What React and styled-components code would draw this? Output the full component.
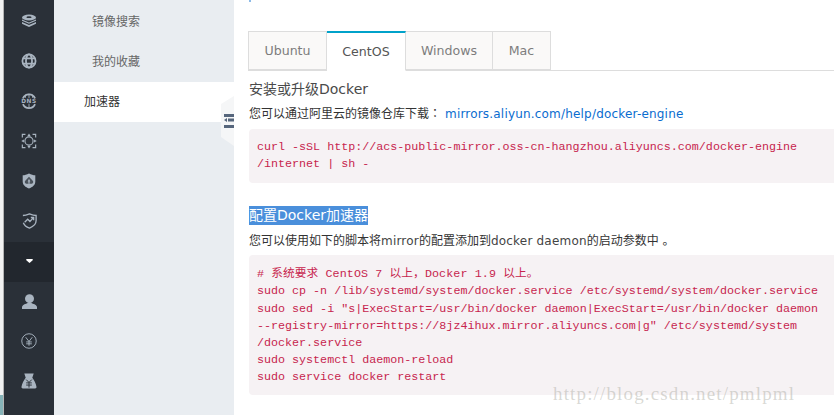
import React from "react";
import styled, { createGlobalStyle } from "styled-components";

const GlobalStyle = createGlobalStyle`
  html, body {
    margin: 0;
    padding: 0;
    height: 415px;
    overflow: hidden;
    background: #fff;
    font-family: "DejaVu Sans", "Noto Sans CJK SC", sans-serif;
  }
`;

const Page = styled.div`
  position: relative;
  display: flex;
  width: 834px;
  height: 415px;
  overflow: hidden;
`;

const Edge = styled.div`
  width: 3px;
  display: flex;
  flex-direction: column;
  justify-content: flex-end;
  background: #f1f1f1;
  border-right: 1px solid #b4b4b4;
`;

const EdgeTeal = styled.div`
  height: 20px;
  background: #86b3b8;
`;

const Rail = styled.nav`
  width: 50px;
  flex-shrink: 0;
  padding-top: 2px;
  background: #2a3038;
  color: #a9b4c0;
`;

const RailItem = styled.div`
  box-sizing: border-box;
  height: 40px;
  padding-bottom: 2px;
  display: flex;
  align-items: center;
  justify-content: center;
  background: ${(props) => (props.$active ? "#22272e" : "transparent")};
  color: ${(props) => (props.$active ? "#fff" : "inherit")};
`;

const SubNav = styled.aside`
  position: relative;
  width: 180px;
  flex-shrink: 0;
  padding-top: 2px;
  background: #e9edf1;
`;

const SubItem = styled.div`
  box-sizing: border-box;
  height: 40px;
  padding-bottom: 4px;
  display: flex;
  align-items: center;
  padding-left: ${(props) => (props.$active ? "30px" : "38px")};
  font-size: 12px;
  color: ${(props) => (props.$active ? "#333" : "#666")};
  background: ${(props) => (props.$active ? "#fff" : "transparent")};
`;

const Handle = styled.div`
  position: absolute;
  right: 0;
  top: 96px;
  width: 13px;
  height: 50px;
  display: flex;
  align-items: center;
  justify-content: flex-end;
  background: #f5f6f7;
  clip-path: polygon(100% 0, 0 8px, 0 41px, 100% 100%);
`;

const Main = styled.main`
  flex: 1;
  min-width: 0;
  padding-left: 15px;
`;

const TopMark = styled.div`
  width: 2px;
  height: 2px;
  background: #8dbbe8;
`;

const Tabs = styled.div`
  display: flex;
  height: 39px;
  margin: 29px 0 0 -1px;
  border-bottom: 1px solid #ddd;
`;

const Tab = styled.div`
  box-sizing: border-box;
  width: ${(props) => props.$width}px;
  height: ${(props) => (props.$active ? "40px" : "39px")};
  display: flex;
  align-items: center;
  justify-content: center;
  font-size: 12.6px;
  color: ${(props) => (props.$active ? "#555" : "#7d7d7d")};
  background: ${(props) => (props.$active ? "#fff" : "#faf9f8")};
  border: 1px solid #ddd;
  border-left-width: ${(props) => (props.$first ? "1px" : "0")};
  border-bottom-color: ${(props) => (props.$active ? "#fff" : "#ddd")};
  border-top: ${(props) => (props.$active ? "2px solid #00a2ca" : "1px solid #ddd")};
`;

const Heading = styled.h4`
  margin: 8px 0 0;
  font-size: 14px;
  font-weight: 400;
  line-height: 20px;
  color: #4a4a4a;
`;

const SecondHeading = styled(Heading)`
  margin-top: 23px;
  line-height: 19px;
`;

const Selected = styled.span`
  display: inline-block;
  background: #4a8fdb;
  color: #fff;
`;

const Para = styled.p`
  margin: ${(props) => props.$gap}px 0 0;
  font-size: 12px;
  line-height: 18px;
  color: #333;
  white-space: nowrap;
`;

const Colon = styled.span`
  font-family: "Noto Sans CJK TC", sans-serif;
  line-height: 0;
`;

const Latin = styled.span`
  letter-spacing: 0.2px;
  color: #444;
`;

const Link = styled.a`
  color: #0a6ccf;
  margin-left: 4px;
  letter-spacing: 0.19px;
`;

const Code = styled.pre`
  margin: ${(props) => props.$gap}px 0 0;
  padding: ${(props) => props.$top}px 8px ${(props) => props.$bottom}px;
  border-radius: 4px 0 0 4px;
  background: #f6f2f4;
  color: #c7254e;
  font-family: "Liberation Mono", "Noto Sans CJK SC", monospace;
  font-size: 11.7px;
  line-height: 17.14px;
  white-space: pre;
`;

const CommentLine = styled.span`
  letter-spacing: 0.1px;
`;

const Watermark = styled.div`
  position: absolute;
  left: 553px;
  top: 381px;
  font-family: "Liberation Serif", serif;
  font-size: 19px;
  line-height: 26px;
  letter-spacing: 1.15px;
  color: rgba(170, 170, 160, 0.45);
  white-space: nowrap;
`;

const StackIcon = () => (
  <svg width="16" height="14" viewBox="0 0 18 16" fill="currentColor">
    <ellipse cx="9" cy="4" rx="8" ry="3.4" />
    <path d="M1 6.2 9 9.6l8-3.4v1.6L9 11.2 1 7.800z" />
    <path d="M1 9.200 9 12.600l8-3.400v1.800L9 14.800 1 11z" />
    <ellipse cx="9" cy="3.600" rx="3" ry="1" fill="#2a3038" />
  </svg>
);

const GlobeIcon = () => (
  <svg width="16" height="16" viewBox="0 0 18 18" fill="none" stroke="currentColor" strokeWidth="2">
    <circle cx="9" cy="9" r="7.400" />
    <ellipse cx="9" cy="9" rx="3.400" ry="7.400" />
    <path d="M2 6h14M2 12h14" />
  </svg>
);

const DnsIcon = () => (
  <svg width="16" height="16" viewBox="0 0 18 18" fill="none" stroke="currentColor">
    <path d="M2.200 6A7.400 7.400 0 0 1 15.800 6M2.200 12.500A7.400 7.400 0 0 0 15.800 12.500" strokeWidth="2" />
    <path d="M9 .800v5M9 12v5M5.500 1.500 4.800 5.500M12.500 1.500 13.200 5.500" strokeWidth="1" />
    <text x="9" y="11.500" textAnchor="middle" fontSize="6.500" fontWeight="700" letterSpacing=".7" fill="currentColor" stroke="none" fontFamily="DejaVu Sans">
      DNS
    </text>
  </svg>
);

const FocusIcon = () => (
  <svg width="16" height="16" viewBox="0 0 18 18" fill="none" stroke="currentColor" strokeWidth="1.300">
    <path d="M1.500 5V1.500H5M13 1.500h3.500V5M16.500 13v3.500H13M5 16.500H1.500V13" />
    <circle cx="9" cy="9" r="4.600" />
    <path d="M9 .500 11 3.600H7zM9 17.500 7 14.400h4zM.300 9l3-1.800v3.600zM17.700 9l-3 1.800V7.200z" fill="currentColor" stroke="none" />
  </svg>
);

const CloudShieldIcon = () => (
  <svg width="14" height="16" viewBox="0 0 16 18" fill="currentColor">
    <path d="M8 .500C5.500 2 3 2.500.800 2.500v7C.800 13.500 4 16 8 17.500c4-1.500 7.200-4 7.200-8v-7C13 2.500 10.500 2 8 .500z" />
    <path d="M8 4 4 8.500A2 2 0 0 0 4.500 12h7a2 2 0 0 0 .500-3.500z" fill="#2a3038" opacity=".75" />
    <path d="M8 6.500 6.500 9.500h3zM7.300 9.500h1.400V12H7.300z" fill="currentColor" />
  </svg>
);

const TrendShieldIcon = () => (
  <svg width="15" height="16" viewBox="0 0 17 18" fill="none" stroke="currentColor" strokeWidth="1.500">
    <path d="M1 2.800C4 2.800 6 2 8.500 1c2.500 1 4.500 1.800 7.500 1.800v5.700c0 4-3 6.800-7.500 8.500C5 15.800 2.500 13.800 1.500 11" />
    <path d="M3 10.500 6.500 7l2.500 2.500L13 5.200M10 5h3.200v3.200" />
  </svg>
);

const CaretIcon = () => (
  <svg width="7" height="4" viewBox="0 0 8 5" fill="currentColor">
    <path d="M0 0h8v1.500L4 5 0 1.500z" />
  </svg>
);

const UserIcon = () => (
  <svg width="15" height="15" viewBox="0 0 16 16" fill="currentColor">
    <circle cx="8" cy="5" r="4.800" />
    <path d="M0 16v-2.500C1 11 4 10.500 6 9.500h4c2 1 5 1.500 6 4V16z" />
  </svg>
);

const YenIcon = () => (
  <svg width="16" height="16" viewBox="0 0 17 17" fill="none" stroke="currentColor">
    <circle cx="8.500" cy="8.500" r="7.700" strokeWidth="1" />
    <path d="M5 4.500 8.500 9 12 4.500M8.500 9v4.500M5.500 9.500h6M5.500 11.500h6" strokeWidth="1" />
  </svg>
);

const BagIcon = () => (
  <svg width="16" height="16" viewBox="0 0 16 17" fill="currentColor">
    <path d="M3 .500h10l-1.500 4.500c2 2.500 4 6 4.500 10 0 1-.500 1.500-1.500 1.500h-13C.500 16.500 0 16 0 15 .500 11 2.500 7.500 4.500 5z" />
    <path d="M5 7l3 3 3-3M8 10v5.500M5 10.500h6M5 12.800h6" fill="none" stroke="#2a3038" strokeWidth="1" />
  </svg>
);

const HandleIcon = () => (
  <svg width="10" height="14" viewBox="0 0 10 14" fill="#56667c">
    <path d="M0 0h10v3H0zM0 11h10v3H0zM4 4.500h6v3H4zM0 6l3-2v4z" />
  </svg>
);

const railIcons = [
  [StackIcon],
  [GlobeIcon],
  [DnsIcon],
  [FocusIcon],
  [CloudShieldIcon],
  [TrendShieldIcon],
  [CaretIcon, true],
  [UserIcon],
  [YenIcon],
  [BagIcon],
];

const installCode = `curl -sSL http://acs-public-mirror.oss-cn-hangzhou.aliyuncs.com/docker-engine
/internet | sh -`;

const mirrorCode = `
sudo cp -n /lib/systemd/system/docker.service /etc/systemd/system/docker.service
sudo sed -i "s|ExecStart=/usr/bin/docker daemon|ExecStart=/usr/bin/docker daemon
--registry-mirror=https://8jz4ihux.mirror.aliyuncs.com|g" /etc/systemd/system
/docker.service
sudo systemctl daemon-reload
sudo service docker restart`;

export default function App() {
  return (
    <Page>
      <GlobalStyle />
      <Edge>
        <EdgeTeal />
      </Edge>
      <Rail>
        {railIcons.map(([Icon, active], i) => (
          <RailItem key={i} $active={active}>
            <Icon />
          </RailItem>
        ))}
      </Rail>
      <SubNav>
        <SubItem>镜像搜索</SubItem>
        <SubItem>我的收藏</SubItem>
        <SubItem $active>加速器</SubItem>
        <Handle>
          <HandleIcon />
        </Handle>
      </SubNav>
      <Main>
        <TopMark />
        <Tabs>
          <Tab $width={79} $first>Ubuntu</Tab>
          <Tab $width={79} $active>CentOS</Tab>
          <Tab $width={87}>Windows</Tab>
          <Tab $width={58}>Mac</Tab>
        </Tabs>
        <Heading>安装或升级Docker</Heading>
        <Para $gap={6}>
          您可以通过阿里云的镜像仓库下载<Colon>：</Colon>
          <Link>mirrors.aliyun.com/help/docker-engine</Link>
        </Para>
        <Code $gap={6} $top={10} $bottom={10}>{installCode}</Code>
        <SecondHeading>
          <Selected>配置Docker加速器</Selected>
        </SecondHeading>
        <Para $gap={7}>
          您可以使用如下的脚本将<Latin>mirror</Latin>的配置添加到<Latin>docker daemon</Latin>的启动参数中 。
        </Para>
        <Code $gap={5} $top={11} $bottom={9}>
          <CommentLine># 系统要求 CentOS 7 以上，Docker 1.9 以上。</CommentLine>
          {mirrorCode}
        </Code>
      </Main>
      <Watermark>http://blog.csdn.net/pmlpml</Watermark>
    </Page>
  );
}
